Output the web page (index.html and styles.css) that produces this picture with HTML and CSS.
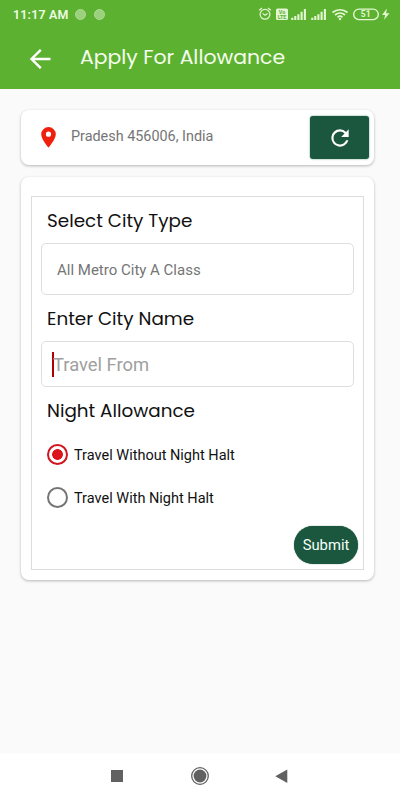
FILE: index.html
```html
<!DOCTYPE html>
<html lang="en">
<head>
<meta charset="utf-8">
<title>Apply For Allowance</title>
<link rel="stylesheet" href="styles.css">
</head>
<body>
<header class="header">
  <div class="status">
    <span class="time">11:17 AM</span>
    <i class="dot"></i><i class="dot"></i>
    <svg class="status-icons" width="136" height="16" viewBox="0 0 136 16" fill="none" stroke="#e3f7d3" stroke-width="1.2">
      <circle cx="7" cy="8.3" r="4.900"/><path d="M4.600 7.400 7 9.300l2.600-1.900M1.200 4.300 4 2M12.800 4.300 10 2"/>
      <rect x="18" y="2.500" width="12" height="11.500" rx="1.600" fill="#e3f7d3" stroke="none"/>
      <g fill="#5db130" stroke="none" font-family="Roboto, sans-serif" font-weight="700" font-size="5.400" text-anchor="middle"><text x="24" y="7.700">Vo</text><text x="24" y="13">LTE</text></g>
      <path stroke-width="2.100" d="M34.300 14v-2.200M37.300 14v-3.900M40.400 14V8.300M43.600 14V5.800M46.900 14V3M54.300 14v-2.200M57.300 14v-3.900M60.400 14V8.300M63.600 14V5.800M66.900 14V3"/>
      <path stroke-width="1.700" d="M74.500 6.500c4.300-3.700 10.700-3.700 15 0M77 9c3-2.600 7-2.600 10 0M79.500 11.300c1.500-1.300 3.500-1.300 5 0"/><circle cx="82" cy="13" r="1.200" fill="#e3f7d3" stroke="none"/>
      <rect x="95.700" y="3.100" width="24.600" height="10.500" rx="5.200" stroke-width="1.400"/>
      <text x="107.700" y="11.400" fill="#e3f7d3" stroke="none" font-family="Roboto, sans-serif" font-weight="700" font-size="8.500" text-anchor="middle">51</text>
      <path d="M129 2.500 124 9h3.200l-1.200 4.800L131.500 7.200h-3.400z" fill="#e3f7d3" stroke="none"/>
    </svg>
  </div>
  <div class="appbar">
    <svg width="22" height="20" viewBox="0 0 22 20" fill="none" stroke="#fff" stroke-width="2.400"><path d="M21.500 10H2.500M11.800.8 2.500 10l9.300 9.200"/></svg>
    <h1>Apply For Allowance</h1>
  </div>
</header>
<main class="content">
  <section class="card location">
    <svg class="pin" width="15" height="21" viewBox="0 0 15 21"><path fill="#f0200f" fill-rule="evenodd" d="M7.500 0A7.300 7.300 0 0 0 .2 7.300C.2 12.500 7.500 20.600 7.500 20.600s7.300-8.100 7.300-13.300A7.300 7.300 0 0 0 7.500 0zm0 4.600a2.600 2.600 0 1 1 0 5.200 2.600 2.600 0 0 1 0-5.200z"/></svg>
    <span class="address">Pradesh 456006, India</span>
    <button class="refresh" aria-label="Refresh"><svg width="26" height="26" viewBox="0 0 24 24"><path fill="#fff" d="M17.650 6.350A7.950 7.950 0 0 0 12 4a8 8 0 1 0 7.730 10h-2.080A6 6 0 1 1 12 6c1.660 0 3.140.69 4.220 1.780L13 11h7V4z"/></svg></button>
  </section>
  <section class="card form-card">
    <form class="form">
      <h2>Select City Type</h2>
      <div class="field select">All Metro City A Class</div>
      <h2 class="city">Enter City Name</h2>
      <div class="field entry"><i class="caret"></i>Travel From</div>
      <h2 class="night">Night Allowance</h2>
      <div class="option"><i class="radio on"></i><span>Travel Without Night Halt</span></div>
      <div class="option"><i class="radio"></i><span>Travel With Night Halt</span></div>
      <button class="submit" type="button">Submit</button>
    </form>
  </section>
</main>
<nav class="nav">
  <svg width="400" height="47" viewBox="0 0 400 47" fill="#616161"><path d="M111 17h12v12h-12zM287.300 16.500v13.500l-12-6.700z"/><circle cx="200" cy="23" r="6.400"/><circle cx="200" cy="23" r="8.300" fill="none" stroke="#616161" stroke-width="1.300"/></svg>
</nav>
</body>
</html>
```
FILE: styles.css
```css
* { box-sizing: border-box; }
body {
  margin: 0;
  height: 800px;
  display: flex;
  flex-direction: column;
  overflow: hidden;
  background: #fafafa;
  font-family: Roboto, "Liberation Sans", sans-serif;
}
h1, h2 {
  margin: 0;
  font-family: Poppins, Inter, sans-serif;
  font-weight: 400;
  white-space: nowrap;
}
button { border: 0; padding: 0; font-family: inherit; }
i { display: block; flex: none; }
svg { display: block; flex: none; }

.header { height: 89px; background: #5db130; color: #fff; }
.status { height: 28px; padding: 1px 6px 0 13px; display: flex; align-items: center; }
.time { width: 62px; font-size: 12.400px; font-weight: 600; letter-spacing: .2px; color: #effbe6; white-space: nowrap; }
.dot { width: 11px; height: 11px; margin-right: 8px; border-radius: 50%; background: #9bd07d; border: 1px solid #aedb94; }
.status-icons { margin: -2px 0 0 auto; }
.appbar { height: 61px; padding-left: 29px; display: flex; align-items: center; }
.appbar h1 { margin: -4px 0 0 29px; font-size: 20.400px; line-height: 30px; color: #f4fdec; }

.content { flex: 1; padding: 21px 26px 0 21px; }
.card { background: #fff; border-radius: 8px; box-shadow: 0 1px 3px rgba(0, 0, 0, .28); }
.location { height: 55px; padding: 0 5px 0 20px; display: flex; align-items: center; }
.address { flex: 1; margin: -2px 0 0 15px; font-size: 14.400px; color: #757575; }
.refresh { width: 59px; height: 43px; border-radius: 3px; background: #1b573e; box-shadow: 0 0 2px #5c9b83; display: grid; place-items: center; }

.form-card { height: 403px; margin-top: 12px; padding: 19px 10px 10px; }
.form { height: 374px; padding: 10px 5px 5px 9px; border: 1px solid #dcdcdc; display: flex; flex-direction: column; }
.form h2 { height: 28px; padding-left: 6px; font-size: 18.350px; line-height: 28px; color: #111; }
.field { width: 313px; border: 1px solid #dedede; border-radius: 5px; display: flex; align-items: center; }
.select { height: 52px; margin-top: 8px; padding: 1px 0 0 15px; font-size: 15px; color: #757575; }
.form .city { margin-top: 10px; }
.entry { height: 46px; margin-top: 8px; padding-left: 10px; font-size: 18.400px; color: #a0a0a0; }
.caret { width: 2px; height: 25px; margin-right: -1px; background: #b00000; }
.form .night { margin-top: 10px; margin-bottom: 8px; }
.option { height: 43px; padding-left: 6px; display: flex; align-items: center; font-size: 14.500px; color: #111; }
.option span { padding-top: 2px; }
.radio { width: 21px; height: 21px; margin-right: 6px; border: 2px solid #757575; border-radius: 50%; }
.radio.on { border-color: #d0151d; background: radial-gradient(circle, #dc151d 5px, transparent 5.700px); }
.submit { width: 64px; height: 38px; margin-top: auto; align-self: flex-end; border-radius: 19px; background: #1b573e; box-shadow: 0 0 1px #1b573e; color: #f4fffb; font-size: 14.800px; }
.nav { height: 47px; background: #fff; }
```
